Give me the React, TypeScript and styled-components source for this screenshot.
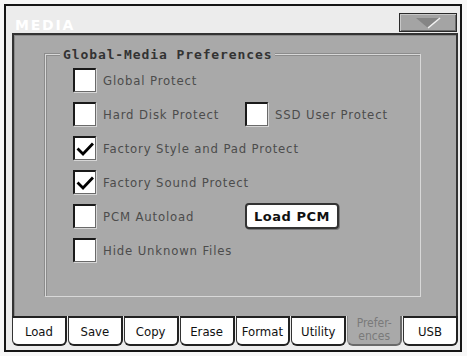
import React from "react";
import styled, { createGlobalStyle, css } from "styled-components";

const Global = createGlobalStyle`
  html, body { margin: 0; padding: 0; background: #f7f7f7; }
  body { width: 467px; height: 356px; overflow: hidden; }
`;

const Frame = styled.div`
  box-sizing: border-box;
  margin: 4px 0 0 4px;
  width: 458px;
  height: 348px;
  border: 2px solid #151515;
  background: #ececec;
  display: flex;
  flex-direction: column;
  padding: 0 2px 4px 6px;
`;

const TitleBar = styled.div`
  height: 27px;
  display: flex;
  align-items: flex-start;
  justify-content: space-between;
`;

const Title = styled.div`
  font-family: "DejaVu Sans", sans-serif;
  font-weight: bold;
  font-size: 14px;
  letter-spacing: 1.8px;
  color: #ffffff;
  margin: 11px 0 0 3px;
`;

const DropButton = styled.div`
  box-sizing: border-box;
  width: 58px;
  height: 19px;
  margin: 7px 1px 0 0;
  background: #a4a4a4;
  border: 1px solid #2a2a2a;
  box-shadow: inset 1px 1px 0 #c8c8c8, inset -1px -1px 0 #6a6a6a;
  display: flex;
  align-items: center;
  justify-content: center;
`;

const Panel = styled.div`
  box-sizing: border-box;
  height: 283px;
  background: #a9a9a9;
  border: 2px solid #333;
  border-bottom: none;
  box-shadow: inset 1px 1px 0 #8a8a8a;
  padding: 19px 35px 0 31px;
`;

const Group = styled.div`
  position: relative;
  box-sizing: border-box;
  height: 243px;
  border: 1px solid #d8d8d8;
  box-shadow: 1px 1px 0 #8c8c8c inset, -1px -1px 0 #8c8c8c;
  padding: 13px 0 0 27px;
`;

const Legend = styled.div`
  position: absolute;
  left: 14px;
  top: -8px;
  padding: 0 3px;
  background: #a9a9a9;
  font-family: "DejaVu Sans Mono", monospace;
  font-weight: bold;
  font-size: 13px;
  letter-spacing: 0.9px;
  color: #333;
  line-height: 15px;
`;

const Rows = styled.div`
  display: grid;
  grid-template-columns: 172px auto;
  grid-auto-rows: 24px;
  row-gap: 10px;
  align-items: center;
`;

const Item = styled.div`
  display: flex;
  align-items: center;
  gap: 7px;
`;

const Box = styled.div`
  box-sizing: border-box;
  flex-shrink: 0;
  width: 23px;
  height: 24px;
  background: #fff;
  border-top: 2px solid #1a1a1a;
  border-left: 2px solid #1a1a1a;
  border-right: 1px solid #6a6a6a;
  border-bottom: 1px solid #6a6a6a;
  box-shadow: 1px 1px 0 #d6d6d6;
  display: flex;
  align-items: center;
  justify-content: center;
`;

const Label = styled.span`
  font-family: "DejaVu Sans Condensed", "DejaVu Sans", sans-serif;
  font-size: 13px;
  letter-spacing: 0.85px;
  color: #4c4c4c;
  white-space: nowrap;
`;

const Button = styled.div`
  box-sizing: border-box;
  width: 94px;
  height: 26px;
  background: #fff;
  border: 2px solid #333;
  border-radius: 4px;
  box-shadow: 1px 1px 0 #777;
  font-family: "DejaVu Sans", sans-serif;
  font-weight: bold;
  font-size: 13px;
  letter-spacing: 0.5px;
  color: #111;
  display: flex;
  align-items: center;
  justify-content: center;
`;

const Tabs = styled.div`
  display: grid;
  grid-template-columns: repeat(8, 1fr);
  column-gap: 1px;
  height: 30px;
  width: 446px;
`;

const Tab = styled.div<{ $active?: boolean }>`
  box-sizing: border-box;
  display: flex;
  align-items: center;
  justify-content: center;
  text-align: center;
  font-family: "DejaVu Sans Condensed", "DejaVu Sans", sans-serif;
  font-size: 13px;
  color: #111;
  background: #fff;
  border-top: 2px solid #222;
  border-left: 1px solid #333;
  border-right: 2px solid #222;
  border-bottom: 2px solid #222;
  border-radius: 0 0 6px 6px;
  ${(p) =>
    p.$active &&
    css`
      background: #a9a9a9;
      color: #7a7a7a;
      border-top: none;
      border-left: 1px solid #8a8a8a;
      border-right: 2px solid #6a6a6a;
      border-bottom: 2px solid #6a6a6a;
      font-size: 12px;
      line-height: 13px;
      padding-top: 0;
    `}
`;

const Check = () => (
  <svg width="18" height="16" viewBox="0 0 18 16">
    <path d="M2.5 8.5 L7 13 L16 3.5" fill="none" stroke="#000" strokeWidth="2.8" strokeLinecap="square" />
  </svg>
);

const CheckItem = ({ label, checked }: { label: string; checked?: boolean }) => (
  <Item>
    <Box>{checked && <Check />}</Box>
    <Label>{label}</Label>
  </Item>
);

export default function App() {
  const tabs = ["Load", "Save", "Copy", "Erase", "Format", "Utility", "Preferences", "USB"];
  return (
    <>
      <Global />
      <Frame>
        <TitleBar>
          <Title>MEDIA</Title>
          <DropButton>
            <svg width="26" height="12" viewBox="0 0 26 12">
              <path d="M1 1 L25 1 L13 11 Z" fill="#858585" />
              <path d="M25 1 L13 11" stroke="#f2f2f2" strokeWidth="1.6" />
            </svg>
          </DropButton>
        </TitleBar>
        <Panel>
          <Group>
            <Legend>Global-Media Preferences</Legend>
            <Rows>
              <CheckItem label="Global Protect" />
              <div />
              <CheckItem label="Hard Disk Protect" />
              <CheckItem label="SSD User Protect" />
              <CheckItem label="Factory Style and Pad Protect" checked />
              <div />
              <CheckItem label="Factory Sound Protect" checked />
              <div />
              <CheckItem label="PCM Autoload" />
              <Button>Load PCM</Button>
              <CheckItem label="Hide Unknown Files" />
              <div />
            </Rows>
          </Group>
        </Panel>
        <Tabs>
          {tabs.map((t, i) => (
            <Tab key={t} $active={i === 6}>
              {i === 6 ? (
                <span>
                  Prefer-
                  <br />
                  ences
                </span>
              ) : (
                t
              )}
            </Tab>
          ))}
        </Tabs>
      </Frame>
    </>
  );
}
